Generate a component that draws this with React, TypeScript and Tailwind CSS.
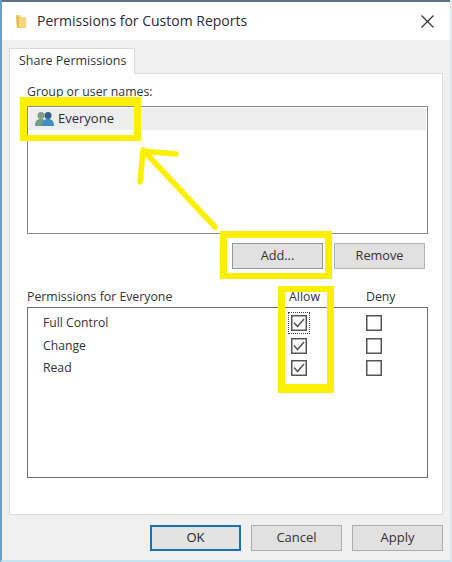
const font = { fontFamily: '"Open Sans", sans-serif' }

const permissions = [
  { name: 'Full Control', focused: true },
  { name: 'Change', focused: false },
  { name: 'Read', focused: false },
]

const CheckBox = ({ checked }: { checked?: boolean }) => (
  <svg width="16" height="16" viewBox="0 0 16 16" className="block">
    <rect x="0.75" y="0.75" width="14.5" height="14.5" fill="#fff" stroke="#555" strokeWidth="1.5" />
    {checked && <path d="M3 7.5 L6.5 11.5 L13 4" fill="none" stroke="#555" strokeWidth="1.5" />}
  </svg>
)

const PushButton = ({ label, primary }: { label: string; primary?: boolean }) => (
  <button
    className={
      primary
        ? 'w-[91px] h-[26px] bg-[#e3e3e3] border-2 border-[#1a70bd] text-[13px] text-[#222]'
        : 'w-[91px] h-[26px] bg-[#e1e1e1] border border-[#adadad] text-[13px] text-[#333]'
    }
  >
    {label}
  </button>
)

const App = () => {
  return (
    <div
      className="relative w-[452px] h-[562px] overflow-hidden bg-[#f0f0f0] border-l-2 border-l-[#6d9fc4] border-r-2 border-r-[#dcebf3] border-b-2 border-b-[#c6e2ef] text-[#2c2c2c]"
      style={font}
    >
      {/* Title bar */}
      <div className="h-[2px] -mx-[2px] bg-[#5d7484]" />
      <div className="h-[38px] bg-white flex items-center -mr-[2px] pl-[13px] pr-[18px]">
        <svg width="12" height="15" viewBox="0 0 12 15" className="mr-[10px] shrink-0">
          <path d="M1 1 H6 V3 H11 V14 H2 Z" fill="#f5d67e" />
          <path d="M1 1 L4 3 V14 H2 Z" fill="#e7bd56" />
        </svg>
        <span className="text-[14px] text-[#2a2a3a] flex-1 leading-none">Permissions for Custom Reports</span>
        <svg width="13" height="13" viewBox="0 0 13 13">
          <path d="M0.5 0.5 L12.5 12.5 M12.5 0.5 L0.5 12.5" stroke="#333" strokeWidth="1.2" />
        </svg>
      </div>

      {/* Tab strip */}
      <div className="pl-[7px] pr-[7px] pt-[8px]">
        <div className="w-[126px] h-[26px] bg-white border border-b-0 border-[#d9d9d9] text-[12.5px] leading-[24px] pl-[9px] text-[#333] relative z-10 -mb-px whitespace-nowrap">
          Share Permissions
        </div>

        {/* Tab panel */}
        <div className="h-[442px] bg-white border border-[#dcdcdc] pl-[17px] pr-[14px]">
          <div className="text-[12.3px] leading-[18px] pt-[9px] h-[32px] text-[#333]">Group or user names:</div>
          <div className="h-[128px] w-[401px] border border-[#8a8a8a] p-px">
            <div className="h-[22px] bg-[#eeeeee] flex items-center pl-[6px]">
              <svg width="20" height="16" viewBox="0 0 20 16" className="mr-[3px]">
                <circle cx="6" cy="4.5" r="3.5" fill="#7f9c86" />
                <path d="M0 15 C0 9 3 8 6 8 C9 8 11 9 11 15 Z" fill="#6f9e84" />
                <circle cx="13" cy="4.5" r="3.5" fill="#35608f" />
                <path d="M7 15 C7 9 10 8 13 8 C16 8 19 9 19 15 Z" fill="#3f8fc4" />
              </svg>
              <span className="text-[13px] text-[#2a2a3a]">Everyone</span>
            </div>
          </div>

          <div className="flex justify-end gap-[11px] w-[398px] pt-[9px]">
            <button className="w-[91px] h-[26px] bg-[#e1e1e1] border border-[#8f9aa3] text-[12.7px] text-[#333]">Add...</button>
            <button className="w-[91px] h-[26px] bg-[#e1e1e1] border border-[#b4b4b4] text-[12.7px] text-[#333]">Remove</button>
          </div>

          <div className="flex items-end w-[401px] h-[38px] text-[12.3px] text-[#333] pb-[1px]">
            <span className="flex-1 leading-[18px]">Permissions for Everyone</span>
            <span className="w-[77px] leading-[18px]">Allow</span>
            <span className="w-[62px] leading-[18px]">Deny</span>
          </div>

          <div className="h-[171px] w-[401px] border border-[#6f6f6f] pt-[4px] pl-[15px]">
            {permissions.map((p) => (
              <div key={p.name} className="flex items-center h-[22.5px] text-[12.2px] text-[#333]">
                <span className="w-[248px]">{p.name}</span>
                <div className={p.focused ? 'outline-1 outline-dotted outline-offset-[2px] outline-[#444]' : ''}>
                  <CheckBox checked />
                </div>
                <div className="ml-[59px]">
                  <CheckBox />
                </div>
              </div>
            ))}
          </div>
        </div>

        {/* Footer buttons */}
        <div className="flex justify-end gap-[10px] pt-[10px]">
          <PushButton label="OK" primary />
          <PushButton label="Cancel" />
          <PushButton label="Apply" />
        </div>
      </div>

      {/* Yellow annotations drawn over the dialog */}
      <div className="absolute left-[18px] top-[97px] w-[121px] h-[44px] border-[#fcf000] border-x-[7px] border-t-[9px] border-b-[6px]" />
      <div className="absolute left-[218px] top-[231px] w-[112px] h-[48px] border-[#fcf000] border-x-[7px] border-t-[7px] border-b-[6px]" />
      <div className="absolute left-[276px] top-[286px] w-[56px] h-[107px] border-[#fcf000] border-x-[7px] border-t-[6px] border-b-[9px]" />
      <svg width="100" height="90" viewBox="0 0 100 90" className="absolute left-[130px] top-[145px]">
        <path
          d="M83 82 L11 5 M8 37 L11 6 L44 9"
          fill="none"
          stroke="#fcf000"
          strokeWidth="5.5"
          strokeLinejoin="round"
          strokeLinecap="round"
        />
      </svg>
    </div>
  )
}

export default App
